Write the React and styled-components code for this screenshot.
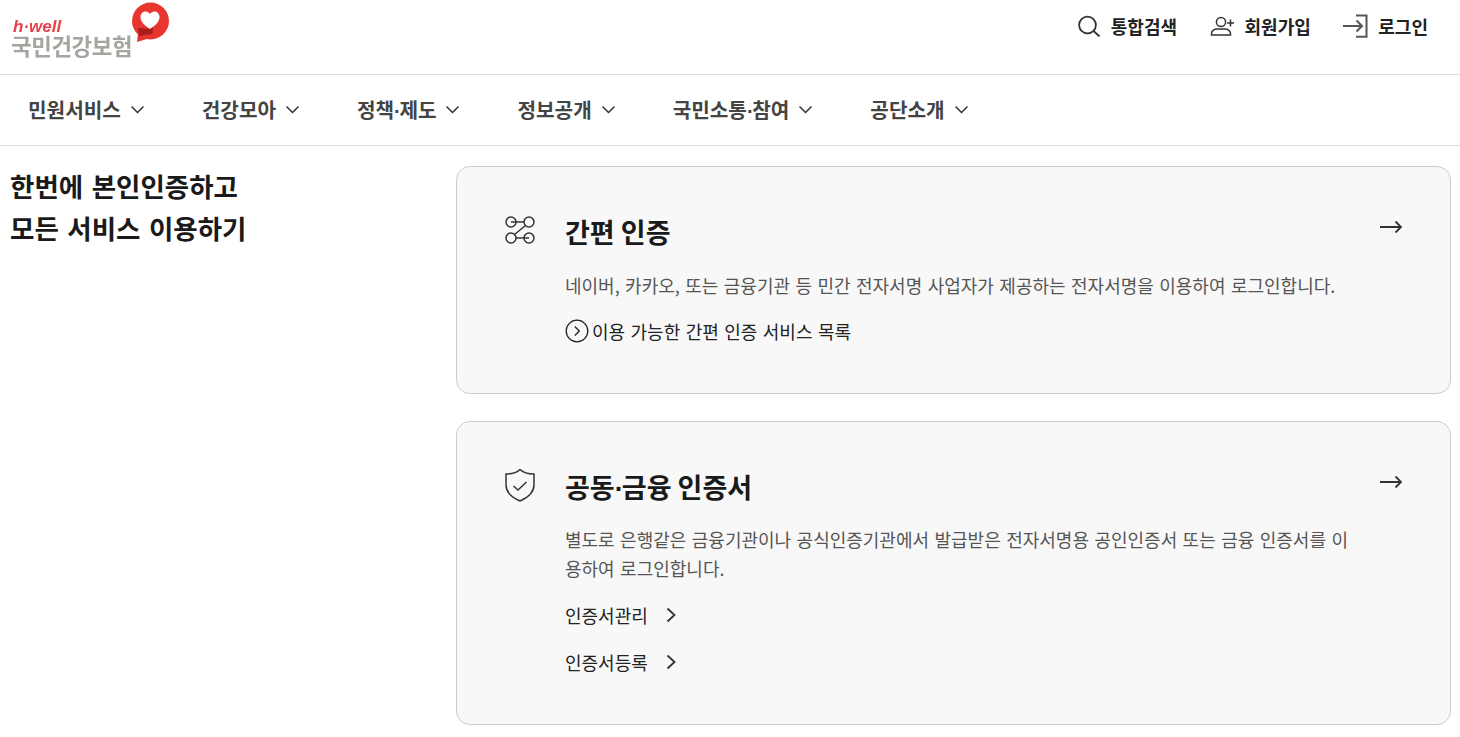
import React from 'react';
import styled, { createGlobalStyle } from 'styled-components';

const GlobalStyle = createGlobalStyle`
  html, body {
    margin: 0;
    padding: 0;
    background: #fff;
    font-family: "Noto Sans CJK KR", "Noto Sans", sans-serif;
  }
  * { box-sizing: border-box; }
`;

// the CJK middle dot is too wide here, this one has the narrow width of the reference
const Dot = styled.span`
  font-family: "Liberation Sans", sans-serif;
  line-height: 1;
  letter-spacing: -0.07em;
`;

const menus = [
  { id: 'civil', label: '민원서비스' },
  { id: 'health', label: '건강모아' },
  { id: 'policy', label: <>정책<Dot>·</Dot>제도</> },
  { id: 'info', label: '정보공개' },
  { id: 'talk', label: <>국민소통<Dot>·</Dot>참여</> },
  { id: 'about', label: '공단소개' },
];

const Stroke = styled.svg`
  display: block;
  flex: none;
  fill: none;
  stroke: ${(p) => p.$color || '#333'};
  stroke-width: ${(p) => p.$weight || 1.6};
`;

function Logo() {
  return (
    <LogoBox>
      <LogoText>
        <LogoEn>h·well</LogoEn>
        <LogoKo>국민건강보험</LogoKo>
      </LogoText>
      <LogoMark width="40" height="44" viewBox="0 0 40 44">
        <path d="M7 32 L6 41 L19 37 Z" fill="#e8352f" />
        <circle cx="19.5" cy="20" r="18.5" fill="#e8352f" />
        <path d="M19 28 C13 24 9.5 20.5 9.5 16 C9.5 12.5 12 10.5 14.5 10.5 C16.5 10.5 18 11.5 19 13 C20 11.5 21.5 10.5 23.5 10.5 C26 10.5 28.5 12.5 28.5 16 C28.5 20.5 25 24 19 28 Z" fill="#fff" />
        <path d="M7 27 L19 28 L22 26.5 L21.5 33 L8 35 Z" fill="#a81e1c" />
      </LogoMark>
    </LogoBox>
  );
}

function GoIcon() {
  return (
    <GoArrow>
      <Stroke width="24" height="14" viewBox="0 0 24 14" $weight="1.8">
        <path d="M1 7 H22 M16.5 1.5 L22 7 L16.5 12.5" />
      </Stroke>
    </GoArrow>
  );
}

function Chevron() {
  return (
    <Stroke width="10" height="16" viewBox="0 0 10 16" $weight="1.8">
      <path d="M1.5 1.5 L8.5 8 L1.5 14.5" />
    </Stroke>
  );
}

export default function App() {
  return (
    <>
      <GlobalStyle />
      <TopBar>
        <Logo />
        <Utils>
          <Util>
            <Stroke width="23" height="22" viewBox="0 0 23 22" $weight="1.8">
              <circle cx="9.5" cy="10" r="8.4" />
              <path d="M15.6 16 L21.5 21.5" />
            </Stroke>
            통합검색
          </Util>
          <Util>
            <Stroke width="25" height="24" viewBox="0 0 25 24" $weight="1.5">
              <circle cx="11" cy="8" r="4.6" />
              <path d="M1.5 21 V19.5 C1.5 17 4 15 7 15 H15 C18 15 20.5 17 20.5 19.5 V21 Z" />
              <path d="M20.5 5.5 V12.5 M17 9 H24" />
            </Stroke>
            회원가입
          </Util>
          <Util>
            <Stroke width="25" height="24" viewBox="0 0 25 24" $color="#555" $weight="2">
              <path d="M13 1.5 H23.5 V22.8 H13" />
              <path d="M0 12 H19 M13.5 6.5 L19 12 L13.5 17.5" />
            </Stroke>
            로그인
          </Util>
        </Utils>
      </TopBar>

      <Nav>
        {menus.map((m) => (
          <NavItem key={m.id}>
            <span>{m.label}</span>
            <Stroke width="13" height="9" viewBox="0 0 13 9" $weight="1.5">
              <path d="M0.5 1.5 L6.5 7.5 L12.5 1.5" />
            </Stroke>
          </NavItem>
        ))}
      </Nav>

      <Main>
        <Lead>
          한번에 본인인증하고
          <br />
          모든 서비스 이용하기
        </Lead>
        <Cards>
          <Card>
            <CardIcon>
              <Stroke width="32" height="32" viewBox="0 0 32 32" $weight="1.5">
                <circle cx="7" cy="8" r="5" />
                <circle cx="25" cy="8" r="5" />
                <circle cx="7" cy="24" r="5" />
                <circle cx="25" cy="24" r="5" />
                <path d="M7 8 H20 M12 24 H25 M21.5 11.5 L10.5 20.5" />
              </Stroke>
            </CardIcon>
            <CardBody>
              <CardTitle>간편 인증</CardTitle>
              <CardText>네이버, 카카오, 또는 금융기관 등 민간 전자서명 사업자가 제공하는 전자서명을 이용하여 로그인합니다.</CardText>
              <CircleLink>
                <Stroke width="24" height="24" viewBox="0 0 24 24" $color="#222" $weight="1.3">
                  <circle cx="12" cy="12" r="10.8" />
                  <path d="M9.8 7.5 L14.3 12 L9.8 16.5" />
                </Stroke>
                이용 가능한 간편 인증 서비스 목록
              </CircleLink>
            </CardBody>
            <GoIcon />
          </Card>

          <Card>
            <CardIcon>
              <Stroke width="32" height="34" viewBox="0 0 32 34" $weight="1.5">
                <path d="M16 0.5 C19 3.5 24 5 30 5 V16 C30 24 24 28.5 16 32 C8 28.5 2 24 2 16 V5 C8 5 13 3.5 16 0.5 Z" />
                <path d="M9.5 17 L14 21 L22.5 13" />
              </Stroke>
            </CardIcon>
            <CardBody>
              <CardTitle>공동<Dot>·</Dot>금융 인증서</CardTitle>
              <CardText>별도로 은행같은 금융기관이나 공식인증기관에서 발급받은 전자서명용 공인인증서 또는 금융 인증서를 이용하여 로그인합니다.</CardText>
              <ArrowLink>
                인증서관리
                <Chevron />
              </ArrowLink>
              <ArrowLink>
                인증서등록
                <Chevron />
              </ArrowLink>
            </CardBody>
            <GoIcon />
          </Card>
        </Cards>
      </Main>
    </>
  );
}

const TopBar = styled.header`
  height: 75px;
  display: flex;
  justify-content: space-between;
  align-items: flex-start;
  padding: 0 32px 0 11px;
  border-bottom: 1px solid #ddd;
`;

const LogoBox = styled.div`
  display: flex;
  align-items: flex-start;
  margin-top: 1px;
  filter: blur(0.3px);
`;

const LogoText = styled.div`
  display: flex;
  flex-direction: column;
  margin-top: 17px;
`;

const LogoEn = styled.span`
  font-family: "Liberation Sans", sans-serif;
  font-size: 17px;
  line-height: 17px;
  font-style: italic;
  font-weight: 700;
  color: #e8414a;
  margin-left: 2px;
`;

const LogoKo = styled.span`
  font-size: 22.4px;
  line-height: 21px;
  font-weight: 700;
  letter-spacing: -0.4px;
  color: #a3a59e;
  white-space: nowrap;
`;

const LogoMark = styled.svg`
  display: block;
  margin-left: -1px;
`;

const Utils = styled.div`
  display: flex;
  gap: 32.5px;
  padding-top: 14px;
`;

const Util = styled.a`
  display: flex;
  align-items: center;
  gap: 10px;
  height: 24px;
  font-size: 18px;
  line-height: 22px;
  font-weight: 700;
  color: #222;
  white-space: nowrap;
`;

const Nav = styled.nav`
  height: 71px;
  display: flex;
  align-items: center;
  gap: 58px;
  padding: 0 0 2px 28px;
  border-bottom: 1px solid #ddd;
`;

const NavItem = styled.a`
  display: flex;
  align-items: center;
  gap: 9.9px;
  font-size: 20.2px;
  font-weight: 700;
  color: #444;
  white-space: nowrap;
`;

const Main = styled.main`
  display: flex;
  align-items: flex-start;
  padding: 20px 9px 0 10px;
`;

const Lead = styled.h2`
  width: 446px;
  flex: none;
  margin: -1px 0 0;
  font-size: 26.5px;
  line-height: 42px;
  font-weight: 700;
  word-spacing: 2.5px;
  color: #1a1a1a;
`;

const Cards = styled.div`
  flex: 1;
  display: flex;
  flex-direction: column;
  gap: 27px;
`;

const Card = styled.section`
  display: flex;
  padding: 44px 47px 38px 47px;
  background: #f8f8f8;
  border: 1px solid #ccc;
  border-radius: 14px;
`;

const CardIcon = styled.div`
  width: 61px;
  flex: none;
  padding-top: 3px;
`;

const CardBody = styled.div`
  flex: 1;
  min-width: 0;
  padding-right: 24px;
`;

const CardTitle = styled.h3`
  margin: 0;
  font-size: 27px;
  line-height: 42px;
  font-weight: 700;
  color: #1a1a1a;
`;

const CardText = styled.p`
  margin: 17.5px 0 8.6px;
  font-size: 18px;
  line-height: 28.8px;
  word-spacing: 1.4px;
  color: #555;
  word-break: break-all;
`;

const CircleLink = styled.a`
  display: flex;
  align-items: center;
  gap: 3px;
  height: 47px;
  margin-top: 1px;
  font-size: 18px;
  word-spacing: 1.4px;
  color: #222;
`;

const ArrowLink = styled.a`
  display: flex;
  align-items: center;
  gap: 18px;
  height: 47px;
  font-size: 18px;
  color: #222;
`;

const GoArrow = styled.div`
  flex: none;
  margin-top: 9px;
`;
